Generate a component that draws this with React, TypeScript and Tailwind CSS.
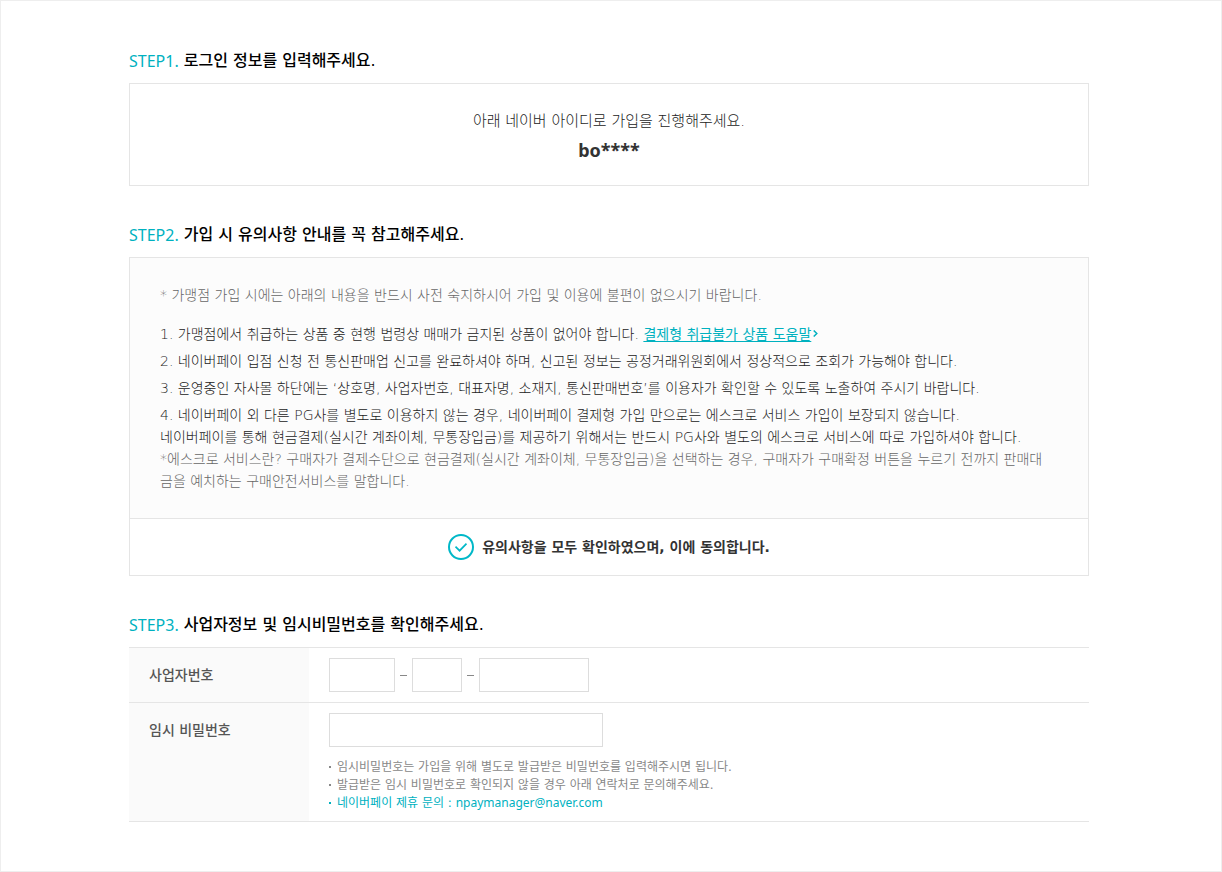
import type { ReactNode } from "react";

const bizNumberFields = [
  { id: "biz1", label: "사업자번호 앞자리", width: "w-[66px]", maxLength: 3 },
  { id: "biz2", label: "사업자번호 가운데자리", width: "w-[50px]", maxLength: 2 },
  { id: "biz3", label: "사업자번호 뒷자리", width: "w-[110px]", maxLength: 5 },
];

const StepTitle = ({ step, children }: { step: string; children: ReactNode }) => (
  <h2 className="mb-2.5 flex h-6 items-start gap-[5px] text-base leading-6 font-medium text-black">
    <span className="font-['Noto_Sans',sans-serif] font-normal text-[#00b1bf]">{step}</span>
    <span>{children}</span>
  </h2>
);

const LoginStep = () => (
  <section>
    <StepTitle step="STEP1.">로그인 정보를 입력해주세요.</StepTitle>
    <div className="border border-[#e5e5e5] pt-6 pb-[19px] text-center">
      <p className="text-[15px] leading-[26px]">아래 네이버 아이디로 가입을 진행해주세요.</p>
      <strong className="block font-['Noto_Sans',sans-serif] text-lg leading-8 font-bold text-[#333]">bo****</strong>
    </div>
  </section>
);

const NoticeStep = () => (
  <section>
    <StepTitle step="STEP2.">가입 시 유의사항 안내를 꼭 참고해주세요.</StepTitle>
    <div className="border border-[#e5e5e5]">
      <div className="bg-[#fcfcfc] px-[30px] py-[26px] text-sm leading-[22px]">
        <p className="text-[#666]">
          * 가맹점 가입 시에는 아래의 내용을 반드시 사전 숙지하시어 가입 및 이용에 불편이 없으시기 바랍니다.
        </p>
        <ol className="mt-[17px] space-y-[5px]">
          <li>
            1. 가맹점에서 취급하는 상품 중 현행 법령상 매매가 금지된 상품이 없어야 합니다.{" "}
            <a href="#help" className="font-normal text-[#00b1bf]">
              <span className="underline underline-offset-2">결제형 취급불가 상품 도움말</span>
              <svg className="ml-0.5 inline-block h-[7px] w-[5px] align-[2px]" viewBox="0 0 5 7" fill="none">
                <path d="M0.7 0.5L3.8 3.5L0.7 6.5" stroke="currentColor" strokeWidth="1.5" />
              </svg>
            </a>
          </li>
          <li>
            2. 네이버페이 입점 신청 전 통신판매업 신고를 완료하셔야 하며, 신고된 정보는 공정거래위원회에서 정상적으로 조회가 가능해야 합니다.
          </li>
          <li>
            3. 운영중인 자사몰 하단에는 ‘상호명, 사업자번호, 대표자명, 소재지, 통신판매번호’를 이용자가 확인할 수 있도록 노출하여 주시기 바랍니다.
          </li>
          <li>
            4. 네이버페이 외 다른 PG사를 별도로 이용하지 않는 경우, 네이버페이 결제형 가입 만으로는 에스크로 서비스 가입이 보장되지 않습니다.
            <br />
            네이버페이를 통해 현금결제(실시간 계좌이체, 무통장입금)를 제공하기 위해서는 반드시 PG사와 별도의 에스크로 서비스에 따로 가입하셔야 합니다.
            <p className="pr-2 text-[#666]">
              *에스크로 서비스란? 구매자가 결제수단으로 현금결제(실시간 계좌이체, 무통장입금)을 선택하는 경우, 구매자가 구매확정 버튼을 누르기 전까지 판매대금을 예치하는 구매안전서비스를 말합니다.
            </p>
          </li>
        </ol>
      </div>
      <div className="flex h-[57px] items-center justify-center border-t border-[#e5e5e5]">
        <label htmlFor="agree" className="flex cursor-pointer items-center gap-2 text-sm font-bold text-[#333]">
          <input id="agree" type="checkbox" defaultChecked className="peer sr-only" />
          <svg className="size-[26px] text-[#ccc] peer-checked:text-[#00b8c8]" viewBox="0 0 26 26" fill="none">
            <circle cx="13" cy="13" r="12" stroke="currentColor" strokeWidth="2" />
            <path d="M7.5 12.7L11.6 16.7L18.5 9.6" stroke="currentColor" strokeWidth="1.7" />
          </svg>
          유의사항을 모두 확인하였으며, 이에 동의합니다.
        </label>
      </div>
    </div>
  </section>
);

const BusinessStep = () => (
  <section>
    <StepTitle step="STEP3.">사업자정보 및 임시비밀번호를 확인해주세요.</StepTitle>
    <table className="w-full border-t border-[#e5e5e5]">
      <tbody>
        <tr className="border-b border-[#e5e5e5]">
          <th scope="row" className="w-[180px] bg-[#fafafa] px-5 py-2.5 text-left align-top text-sm leading-[34px] font-medium text-[#555]">
            <label htmlFor="biz1">사업자번호</label>
          </th>
          <td className="px-5 py-2.5">
            <div className="flex items-center">
              {bizNumberFields.map(({ id, label, width, maxLength }, i) => (
                <div key={id} className="flex items-center">
                  {i > 0 && <span className="mx-[5px] h-px w-[7px] bg-[#888]" />}
                  <input
                    id={id}
                    type="text"
                    aria-label={label}
                    maxLength={maxLength}
                    className={`h-[34px] border border-[#ddd] bg-white px-2 text-sm ${width}`}
                  />
                </div>
              ))}
            </div>
          </td>
        </tr>
        <tr className="border-b border-[#e5e5e5]">
          <th scope="row" className="bg-[#fafafa] px-5 py-2.5 text-left align-top text-sm leading-[34px] font-medium text-[#555]">
            <label htmlFor="tempPassword">임시 비밀번호</label>
          </th>
          <td className="px-5 pt-2.5 pb-[9px]">
            <input
              id="tempPassword"
              type="password"
              className="block h-[34px] w-[274px] border border-[#ddd] bg-white px-2 text-sm"
            />
            <ul className="mt-[11px] text-xs leading-[18px] font-normal text-[#888]">
              <li className="flex items-center gap-1.5">
                <span className="size-0.5 bg-current" />
                임시비밀번호는 가입을 위해 별도로 발급받은 비밀번호를 입력해주시면 됩니다.
              </li>
              <li className="flex items-center gap-1.5">
                <span className="size-0.5 bg-current" />
                발급받은 임시 비밀번호로 확인되지 않을 경우 아래 연락처로 문의해주세요.
              </li>
              <li className="flex items-center gap-1.5 text-[#00b1bf]">
                <span className="size-0.5 bg-current" />
                <p>
                  네이버페이 제휴 문의 : <span className="font-['Noto_Sans',sans-serif]">npaymanager@naver.com</span>
                </p>
              </li>
            </ul>
          </td>
        </tr>
      </tbody>
    </table>
  </section>
);

const App = () => (
  <div className="min-h-screen border border-[#eee] bg-white pt-12 pr-1 pb-12 font-['DejaVu_Sans','Noto_Sans_CJK_KR',sans-serif] font-light text-[#222]">
    <main className="mx-auto max-w-[960px] space-y-[37px]">
      <LoginStep />
      <NoticeStep />
      <BusinessStep />
    </main>
  </div>
);

export default App;
